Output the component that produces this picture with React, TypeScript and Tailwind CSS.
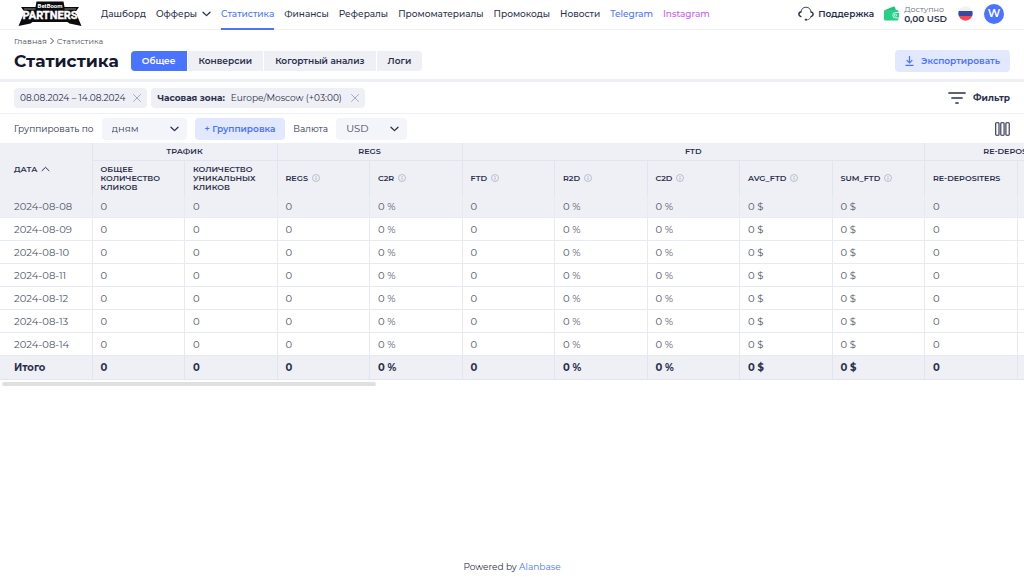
import React, { useState } from 'react';
import { X } from 'lucide-react';

type Column = {
  title: string;
  suffix?: string;
  info?: boolean;
};

type Group = {
  title: string;
  columns: Column[];
};

const navLinks = [
  { title: 'Дашборд' },
  { title: 'Офферы', hasMenu: true },
  { title: 'Статистика', active: true },
  { title: 'Финансы' },
  { title: 'Рефералы' },
  { title: 'Промоматериалы' },
  { title: 'Промокоды' },
  { title: 'Новости' },
  { title: 'Telegram', color: 'text-[#4a74ff]' },
  { title: 'Instagram', color: 'text-[#cc5cf5]' },
];

const tabs = ['Общее', 'Конверсии', 'Когортный анализ', 'Логи'];

const groups: Group[] = [
  {
    title: 'ТРАФИК',
    columns: [{ title: 'ОБЩЕЕ КОЛИЧЕСТВО КЛИКОВ' }, { title: 'КОЛИЧЕСТВО УНИКАЛЬНЫХ КЛИКОВ' }],
  },
  {
    title: 'REGS',
    columns: [{ title: 'REGS', info: true }, { title: 'C2R', suffix: ' %', info: true }],
  },
  {
    title: 'FTD',
    columns: [
      { title: 'FTD', info: true },
      { title: 'R2D', suffix: ' %', info: true },
      { title: 'C2D', suffix: ' %', info: true },
      { title: 'AVG_FTD', suffix: ' $', info: true },
      { title: 'SUM_FTD', suffix: ' $', info: true },
    ],
  },
  {
    title: 'RE-DEPOSITERS',
    columns: [{ title: 'RE-DEPOSITERS' }, { title: '' }],
  },
];

const columns = groups.flatMap(g => g.columns);

const dates = ['2024-08-08', '2024-08-09', '2024-08-10', '2024-08-11', '2024-08-12', '2024-08-13', '2024-08-14'];

const Logo = () => (
  <svg width="64" height="28" viewBox="0 0 64 28" role="img" aria-label="BetBoom Partners">
    <path d="M18.500 1.500h27l1 5.500H61l-3.500 5L63.500 26l-12-2.500-2-1.500h-35l-2 1.500-12 2.500L6.500 12 3 7h14.500z" fill="#0b0b0d" />
    <path d="M6 9h11.500M46.500 9H58" stroke="#fff" strokeWidth="0.500" />
    <text x="32" y="7.500" fill="#fff" fontSize="6" fontWeight="700" textAnchor="middle" fontFamily="Roboto, sans-serif">
      BetBoom
    </text>
    <text
      x="32"
      y="19"
      fill="#fff"
      stroke="#fff"
      strokeWidth="0.400"
      fontSize="11"
      fontWeight="700"
      textAnchor="middle"
      fontFamily="Roboto, sans-serif"
    >
      PARTNERS
    </text>
  </svg>
);

const Chevron = ({ up = false, strokeWidth = 1.3 }: { up?: boolean; strokeWidth?: number }) => (
  <svg
    width="9"
    height="6"
    viewBox="0 0 9 6"
    fill="none"
    stroke="currentColor"
    strokeWidth={strokeWidth}
    strokeLinecap="round"
    strokeLinejoin="round"
    className="shrink-0"
  >
    <path d={up ? 'M1 4.700l3.500-3.400L8 4.700' : 'M1 1.200l3.500 3.400L8 1.200'} />
  </svg>
);

const HeadsetIcon = () => (
  <svg width="16" height="15" viewBox="0 0 16 15" fill="none" stroke="#2b2f4a" strokeLinecap="round">
    <path d="M3 6C3.200 3 5.200 1.200 8 1.200S12.800 3 13 6" strokeWidth="0.900" />
    <path d="M2.800 6C1.300 6.200.9 7.300.9 8.300s.4 2.100 1.900 2.300M13.200 6c1.500.2 1.900 1.300 1.900 2.300s-.4 2.100-1.900 2.300" strokeWidth="1.500" />
    <path d="M12.800 11c-.5 1.600-1.400 2.200-2.600 2.500" strokeWidth="0.700" />
    <path d="M7.600 13.700h1" strokeWidth="1.800" />
  </svg>
);

const WalletIcon = () => (
  <svg width="15" height="15" viewBox="0 0 15 15">
    <path d="M1 4 9.500.6c.6-.2 1 0 1.300.6L12 4z" fill="#20bf7c" />
    <path d="M1.500 4H13a1.500 1.500 0 0 1 1.500 1.500v7.500A1.500 1.500 0 0 1 13 14.500H1.500A1.500 1.500 0 0 1 0 13V4.500z" fill="#27cf88" />
    <path d="M15 6.500h-3.500a2.700 2.700 0 0 0 0 5.400H15" fill="#27cf88" stroke="#fff" strokeWidth="0.800" />
    <circle cx="11.500" cy="9.200" r="1.100" fill="none" stroke="#fff" strokeWidth="0.700" />
  </svg>
);

const FlagIcon = () => (
  <svg width="15" height="15" viewBox="0 0 15 15" role="img" aria-label="Русский">
    <clipPath id="flag">
      <circle cx="7.500" cy="7.500" r="7.200" />
    </clipPath>
    <g clipPath="url(#flag)">
      <path d="M0 0h15v5H0z" fill="#f3f3f5" />
      <path d="M0 5h15v5H0z" fill="#3a48a5" />
      <path d="M0 10h15v5H0z" fill="#fb4650" />
    </g>
  </svg>
);

const DownloadIcon = () => (
  <svg width="9" height="10" viewBox="0 0 9 10" fill="none" stroke="currentColor" strokeWidth="1.200">
    <path d="M4.500 0v6.800M1.700 4.200l2.800 2.800 2.800-2.800M.5 9.300h8" />
  </svg>
);

const FilterIcon = () => (
  <svg width="18" height="12" viewBox="0 0 18 12" fill="none" stroke="#2b2f4a" strokeWidth="1.700" strokeLinecap="round">
    <path d="M1 1h16M4 6h10M8 11h2" />
  </svg>
);

const ColumnsIcon = () => (
  <svg width="15" height="14" viewBox="0 0 15 14" fill="none" stroke="#2b2f4a" strokeWidth="1.100">
    <rect x="0.700" y="0.700" width="3.300" height="12.600" rx="0.800" />
    <rect x="5.800" y="0.700" width="3.300" height="12.600" rx="0.800" />
    <rect x="10.900" y="0.700" width="3.300" height="12.600" rx="0.800" />
  </svg>
);

const InfoIcon = () => (
  <svg width="8" height="8" viewBox="0 0 8 8" fill="none" stroke="#a3abc2" className="shrink-0">
    <circle cx="4" cy="4" r="3.500" strokeWidth="0.700" />
    <path d="M4 3.500v2.300M4 2v.8" strokeWidth="0.900" />
  </svg>
);

const Select = ({ id, options, className }: { id: string; options: string[]; className: string }) => (
  <div className={`relative ${className}`}>
    <select id={id} className="block h-[22px] w-full appearance-none rounded-sm bg-[#f4f5fb] px-[10px] text-[10px] text-[#3f4359] outline-none">
      {options.map(option => (
        <option key={option}>{option}</option>
      ))}
    </select>
    <span className="pointer-events-none absolute inset-y-0 right-2 flex items-center">
      <Chevron />
    </span>
  </div>
);

const Header = () => (
  <header className="flex h-[30px] items-stretch border-b border-[#eff0f5] pr-5 pl-[18px]">
    <a href="#" className="mr-[19px] shrink-0">
      <Logo />
    </a>
    <nav className="flex gap-[10px] text-[9px] font-medium">
      {navLinks.map(link => (
        <a
          key={link.title}
          href="#"
          className={`-mb-px flex items-center gap-[5px] whitespace-nowrap border-b-2 ${
            link.active ? 'border-[#4a74ff] text-[#4a74ff]' : `border-transparent ${link.color || ''}`
          }`}
        >
          {link.title}
          {link.hasMenu && <Chevron />}
        </a>
      ))}
    </nav>
    <div className="ml-auto flex items-center pb-[2px]">
      <a href="#" className="flex items-center gap-1 text-[9px] font-semibold">
        <HeadsetIcon />
        Поддержка
      </a>
      <a href="#" className="ml-[10px] flex items-center gap-[5px]">
        <WalletIcon />
        <span className="flex flex-col text-[9px] leading-[10px] font-semibold">
          <span className="text-[8px] font-normal text-[#6b6f82]">Доступно</span>
          0,00 USD
        </span>
      </a>
      <button className="ml-[11px]">
        <FlagIcon />
      </button>
      <button className="ml-[11px] size-5 rounded-full bg-[#4a74ff] text-[11px] font-semibold text-white">W</button>
    </div>
  </header>
);

const PageTitle = () => {
  const [activeTab, setActiveTab] = useState('Общее');

  return (
    <div className="px-[14px] pt-[5px] pb-[6px]">
      <div className="flex items-center gap-[2px] text-[8px] leading-3 text-[#4a4e63]">
        <a href="#">Главная</a>
        <svg width="6" height="8" viewBox="0 0 6 8" fill="none" stroke="currentColor" strokeWidth="1">
          <path d="M1.500 1l3 3-3 3" />
        </svg>
        <span>Статистика</span>
      </div>
      <div className="mt-[2px] flex items-center">
        <h1 className="text-[17px] leading-6 font-bold text-[#14172f]">Статистика</h1>
        <div className="ml-3 flex gap-px overflow-hidden rounded-sm">
          {tabs.map(tab => (
            <button
              key={tab}
              onClick={() => setActiveTab(tab)}
              className={`h-5 px-[11px] text-[9px] font-semibold ${
                activeTab === tab ? 'bg-[#4a74ff] text-white' : 'bg-[#eff0f5]'
              }`}
            >
              {tab}
            </button>
          ))}
        </div>
        <button className="ml-auto flex h-[22px] items-center gap-[7px] rounded-sm bg-[#e2e8ff] px-[10px] text-[9px] font-semibold text-[#4a74ff]">
          <DownloadIcon />
          Экспортировать
        </button>
      </div>
    </div>
  );
};

const Filters = () => (
  <>
    <div className="flex h-8 items-center gap-1 border-b border-[#eff0f5] px-[14px] text-[9px]">
      <div className="flex h-5 items-center gap-[5px] rounded-sm bg-[#eff0f5] pr-[3px] pl-[6px]">
        08.08.2024 – 14.08.2024
        <button aria-label="Сбросить период">
          <X size={14} strokeWidth={1.5} className="text-[#9aa3bb]" />
        </button>
      </div>
      <div className="flex h-5 items-center gap-[6px] rounded-sm bg-[#eff0f5] pr-[3px] pl-[6px]">
        <span className="font-bold">Часовая зона:</span>
        Europe/Moscow (+03:00)
        <button aria-label="Сбросить часовую зону">
          <X size={14} strokeWidth={1.5} className="text-[#9aa3bb]" />
        </button>
      </div>
      <button className="ml-auto flex items-center gap-[7px] font-bold">
        <FilterIcon />
        Фильтр
      </button>
    </div>
    <div className="flex h-[29px] items-center gap-2 px-[14px] text-[9px]">
      <label htmlFor="group-by">Группировать по</label>
      <Select id="group-by" options={['дням', 'неделям', 'месяцам']} className="w-[85px]" />
      <button className="h-[22px] rounded-sm bg-[#e2e8ff] px-[10px] font-semibold text-[#4a74ff]">+ Группировка</button>
      <label htmlFor="currency">Валюта</label>
      <Select id="currency" options={['USD', 'EUR', 'RUB']} className="w-[71px]" />
      <button aria-label="Колонки" className="ml-auto">
        <ColumnsIcon />
      </button>
    </div>
  </>
);

const StatsTable = () => (
  <div className="overflow-hidden">
    <table className="w-full min-w-[1110px] table-fixed border-separate border-spacing-0 text-left text-[10px]">
      <thead className="bg-[#eff0f5] text-[8px] leading-[9px]">
        <tr className="h-[18px]">
          <th rowSpan={2} className="border-r border-[#e2e4f0] px-[14px] font-semibold">
            <button className="flex items-center gap-1">
              ДАТА
              <Chevron up strokeWidth={1} />
            </button>
          </th>
          {groups.map(group => (
            <th
              key={group.title}
              colSpan={group.columns.length}
              className="border-r border-b border-[#e2e4f0] text-center font-semibold"
            >
              {group.title}
            </th>
          ))}
        </tr>
        <tr className="h-[34px]">
          {columns.map((column, index) => (
            <th key={index} className="border-r border-[#e2e4f0] px-2 font-semibold">
              <div className="flex items-center gap-1">
                {column.title}
                {column.info && <InfoIcon />}
              </div>
            </th>
          ))}
        </tr>
      </thead>
      <tbody className="text-[#4f5369]">
        {dates.map((date, row) => (
          <tr key={date} className={`h-[23px] ${row === 0 ? 'bg-[#eff0f5]' : 'bg-white'}`}>
            <td className="border-r border-b border-[#e8eaf2] px-[14px]">{date}</td>
            {columns.map((column, index) => (
              <td key={index} className="border-r border-b border-[#e8eaf2] px-2">
                {column.title && `0${column.suffix || ''}`}
              </td>
            ))}
          </tr>
        ))}
      </tbody>
      <tfoot>
        <tr className="h-6 bg-[#eff0f5] font-bold">
          <td className="border-r border-b border-[#e2e4f0] px-[14px]">Итого</td>
          {columns.map((column, index) => (
            <td key={index} className="border-r border-b border-[#e2e4f0] px-2">
              {column.title && `0${column.suffix || ''}`}
            </td>
          ))}
        </tr>
      </tfoot>
    </table>
    <div className="mt-[2px] ml-[2px] h-1 w-[36.5%] rounded-full bg-[#dfe1e0]" />
  </div>
);

export default function App() {
  return (
    <div className="flex min-h-screen flex-col bg-white font-['Montserrat','Inter',sans-serif] text-[#2b2f4a]">
      <Header />
      <PageTitle />
      <div className="h-[3px] bg-[#eff0f5]" />
      <Filters />
      <StatsTable />
      <footer className="mt-auto pb-1 text-center text-[9px] leading-3">
        Powered by{' '}
        <a href="#" className="text-[#4a74ff]">
          Alanbase
        </a>
      </footer>
    </div>
  );
}
